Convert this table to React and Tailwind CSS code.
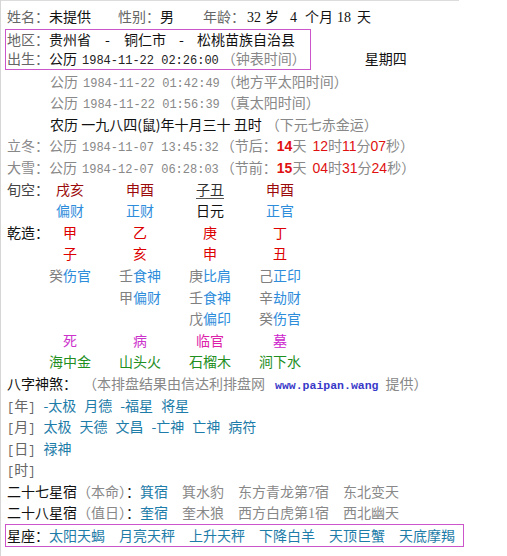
import React from "react";

const mono = "font-['Liberation_Mono',monospace] text-[12px]";
const sans = "font-['Liberation_Sans',Arial,sans-serif]";
const serif = "font-['Liberation_Serif',serif]";

const gray = "text-[#666]";
const light = "text-[#888]";
const blue = "text-[#2e8ddb]";
const teal = "text-[#1d7ca8]";

const Row = ({ className = "", children }) => (
  <div className={`h-[21.6px] leading-[21.6px] whitespace-pre ${className}`}>{children}</div>
);

const Pillars = ({ label, cells }) => (
  <div className="grid grid-cols-[28px_70px_70px_70px_70px] h-[21.6px] leading-[21.6px]">
    <div className="whitespace-nowrap">{label}</div>
    {cells.map((c, i) => (
      <div key={i} className="text-center whitespace-nowrap">
        {c}
      </div>
    ))}
  </div>
);

const Hs = ({ s, g }) => (
  <>
    <span className="text-[#808080]">{s}</span>
    <span className={blue}>{g}</span>
  </>
);

const Shensha = ({ label, items }) => (
  <div className="flex gap-[8px] h-[21.6px] leading-[21.6px] whitespace-nowrap">
    <span className={gray}>
      <span className={mono}>[</span>
      {label}
      <span className={mono}>]</span>
    </span>
    {items.map((it, i) => (
      <span key={i} className={teal}>
        {it}
      </span>
    ))}
  </div>
);

export default function App() {
  return (
    <div className="relative min-h-[556px] bg-white border-l border-[#d6d6d6] font-['Noto_Sans_CJK_SC',sans-serif] text-[14px] text-[#111]">
      <div className="h-px w-[458px] bg-[#dcdcdc]" />
      <div className="pl-[6px] pt-[5px]">
        <Row>
          <span className={gray}>姓名：</span>
          <span>未提供</span>
          <span className={`${gray} ml-[27px]`}>性别：</span>
          <span>男</span>
          <span className={`${gray} ml-[29px]`}>年龄：</span>
          <span className={`${serif} ml-[2px]`}>32</span>
          <span className="ml-[4px]">岁</span>
          <span className={`${serif} ml-[11px]`}>4</span>
          <span className="ml-[8px]">个月</span>
          <span className={`${serif} ml-[4px]`}>18</span>
          <span className="ml-[6px]">天</span>
        </Row>

        <div className="flex items-end mt-[1px]">
          <div className="border border-[#cc55cc] ml-[-2px] pl-[1px] pr-[4px]">
            <div className="h-[19.5px] leading-[19.5px] whitespace-pre">
              <span className={gray}>地区：</span>贵州省
              <span className="inline-block w-[33px] text-center">-</span>铜仁市
              <span className="inline-block w-[31px] text-center">-</span>松桃苗族自治县
            </div>
            <div className="h-[19.5px] leading-[19.5px] whitespace-pre">
              <span className={gray}>出生：</span>公历<span className={`${mono} ml-[5px] text-[#222]`}>1984-11-22 02:26:00</span>
              <span className={`${light} ml-[3px]`}>（钟表时间）</span>
            </div>
          </div>
          <div className="ml-[54px] h-[19.5px] leading-[19.5px] mb-[1px]">星期四</div>
        </div>

        <Row className={`${light} pl-[43px] mt-[1px]`}>
          公历<span className={`${mono} ml-[5px]`}>1984-11-22 01:42:49</span>
          <span className="ml-[2px]">（地方平太阳时间）</span>
        </Row>
        <Row className={`${light} pl-[43px]`}>
          公历<span className={`${mono} ml-[5px]`}>1984-11-22 01:56:39</span>
          <span className="ml-[2px]">（真太阳时间）</span>
        </Row>
        <Row className="pl-[43px]">
          农历 一九八四(鼠)年十月三十 丑时<span className={`${light} ml-[4px]`}>（下元七赤金运）</span>
        </Row>
        <Row className={light}>
          立冬：公历<span className={`${mono} ml-[5px]`}>1984-11-07 13:45:32</span>
          <span className="ml-[2px]">（节后：</span>
          <span className={`${sans} font-bold text-[#e01010]`}>14</span>天
          <span className={`${sans} text-[#e01010] ml-[6px]`}>12</span>时
          <span className={`${sans} text-[#e01010]`}>11</span>分
          <span className={`${sans} text-[#e01010]`}>07</span>秒）
        </Row>
        <Row className={light}>
          大雪：公历<span className={`${mono} ml-[5px]`}>1984-12-07 06:28:03</span>
          <span className="ml-[2px]">（节前：</span>
          <span className={`${sans} font-bold text-[#e01010]`}>15</span>天
          <span className={`${sans} text-[#e01010] ml-[6px]`}>04</span>时
          <span className={`${sans} text-[#e01010]`}>31</span>分
          <span className={`${sans} text-[#e01010]`}>24</span>秒）
        </Row>

        <Pillars
          label={<span className="text-[#444]">旬空：</span>}
          cells={[
            <span className="text-[#9b0a0a]">戌亥</span>,
            <span className="text-[#9b0a0a]">申酉</span>,
            <span className="text-[#333] underline underline-offset-[3px] decoration-[#555]">子丑</span>,
            <span className="text-[#9b0a0a]">申酉</span>,
          ]}
        />
        <Pillars
          label=""
          cells={[
            <span className={blue}>偏财</span>,
            <span className={blue}>正财</span>,
            <span>日元</span>,
            <span className={blue}>正官</span>,
          ]}
        />
        <Pillars
          label="乾造："
          cells={["甲", "乙", "庚", "丁"].map((c) => (
            <span className="text-[#dd0000]">{c}</span>
          ))}
        />
        <Pillars
          label=""
          cells={["子", "亥", "申", "丑"].map((c) => (
            <span className="text-[#dd0000]">{c}</span>
          ))}
        />
        <Pillars
          label=""
          cells={[<Hs s="癸" g="伤官" />, <Hs s="壬" g="食神" />, <Hs s="庚" g="比肩" />, <Hs s="己" g="正印" />]}
        />
        <Pillars label="" cells={["", <Hs s="甲" g="偏财" />, <Hs s="壬" g="食神" />, <Hs s="辛" g="劫财" />]} />
        <Pillars label="" cells={["", "", <Hs s="戊" g="偏印" />, <Hs s="癸" g="伤官" />]} />
        <Pillars
          label=""
          cells={[
            <span className="text-[#cc33cc]">死</span>,
            <span className="text-[#cc33cc]">病</span>,
            <span className="text-[#dd22aa]">临官</span>,
            <span className="text-[#cc22cc]">墓</span>,
          ]}
        />
        <Pillars
          label=""
          cells={["海中金", "山头火", "石榴木", "涧下水"].map((c) => (
            <span className="text-[#1f8f1f]">{c}</span>
          ))}
        />

        <Row>
          八字神煞：<span className={`${light} ml-[13px]`}>（本排盘结果由信达利排盘网</span>
          <span className={`font-['Liberation_Mono',monospace] text-[11.5px] font-bold text-[#3838c8] ml-[10px]`}>
            www.paipan.wang
          </span>
          <span className={`${light} ml-[7px]`}>提供）</span>
        </Row>

        <Shensha label="年" items={["-太极", "月德", "-福星", "将星"]} />
        <Shensha label="月" items={["太极", "天德", "文昌", "-亡神", "亡神", "病符"]} />
        <Shensha label="日" items={["禄神"]} />
        <Shensha label="时" items={[]} />

        <Row>
          二十七星宿<span className={light}>（本命）</span>：<span className={teal}>箕宿</span>
          <span className={light}>　箕水豹　东方青龙第<span className={serif}>7</span>宿　东北变天</span>
        </Row>
        <Row>
          二十八星宿<span className={light}>（值日）</span>：<span className={teal}>奎宿</span>
          <span className={light}>　奎木狼　西方白虎第<span className={serif}>1</span>宿　西北幽天</span>
        </Row>

        <div className="inline-block border border-[#cc55cc] ml-[-2px] pl-[1px] pr-[8px] h-[23px] leading-[21px] whitespace-pre">
          星座：<span className={teal}>太阳天蝎　月亮天秤　上升天秤　下降白羊　天顶巨蟹　天底摩羯</span>
        </div>
      </div>
    </div>
  );
}
